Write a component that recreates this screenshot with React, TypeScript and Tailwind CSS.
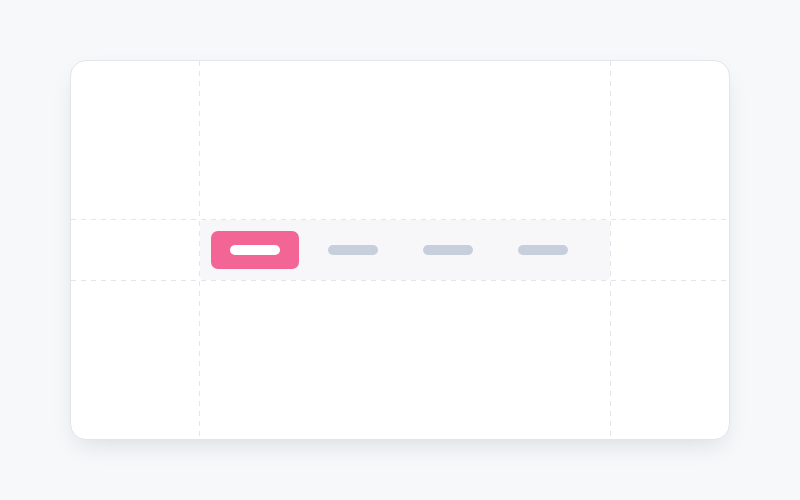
export default function App() {
  const vLine = "bg-[repeating-linear-gradient(to_bottom,#e3e5ea_0_5px,transparent_5px_10px)]";
  const hLine = "bg-[repeating-linear-gradient(to_right,#e3e5ea_0_5px,transparent_5px_10px)]";

  return (
    <div className="w-[800px] h-[500px] bg-[#f7f8fa] flex items-start justify-center pt-[60px]">
      <div className="w-[660px] h-[380px] bg-white border border-[#e2e5e9] rounded-2xl shadow-[0_10px_25px_-6px_rgba(15,23,42,0.12)] overflow-hidden grid grid-cols-[128px_1px_410px_1px_1fr] grid-rows-[158px_1px_60px_1px_1fr]">
        <div className={`col-start-2 row-start-1 row-span-5 ${vLine}`} />
        <div className={`col-start-4 row-start-1 row-span-5 ${vLine}`} />
        <div className={`col-start-1 col-span-5 row-start-2 ${hLine}`} />
        <div className={`col-start-1 col-span-5 row-start-4 ${hLine}`} />
        <div className="col-start-3 row-start-3 bg-[#f7f7f9] rounded-[3px] flex items-center pl-[11px]">
          <div className="w-[88px] h-[38px] rounded-[7px] bg-[#f26594] flex items-center justify-center">
            <div className="w-[50px] h-[10px] rounded-full bg-white" />
          </div>
          <div className="flex items-center gap-[45px] ml-[29px]">
            <div className="w-[50px] h-[10px] rounded-full bg-[#c8cfdc]" />
            <div className="w-[50px] h-[10px] rounded-full bg-[#c8cfdc]" />
            <div className="w-[50px] h-[10px] rounded-full bg-[#c8cfdc]" />
          </div>
        </div>
      </div>
    </div>
  );
}
